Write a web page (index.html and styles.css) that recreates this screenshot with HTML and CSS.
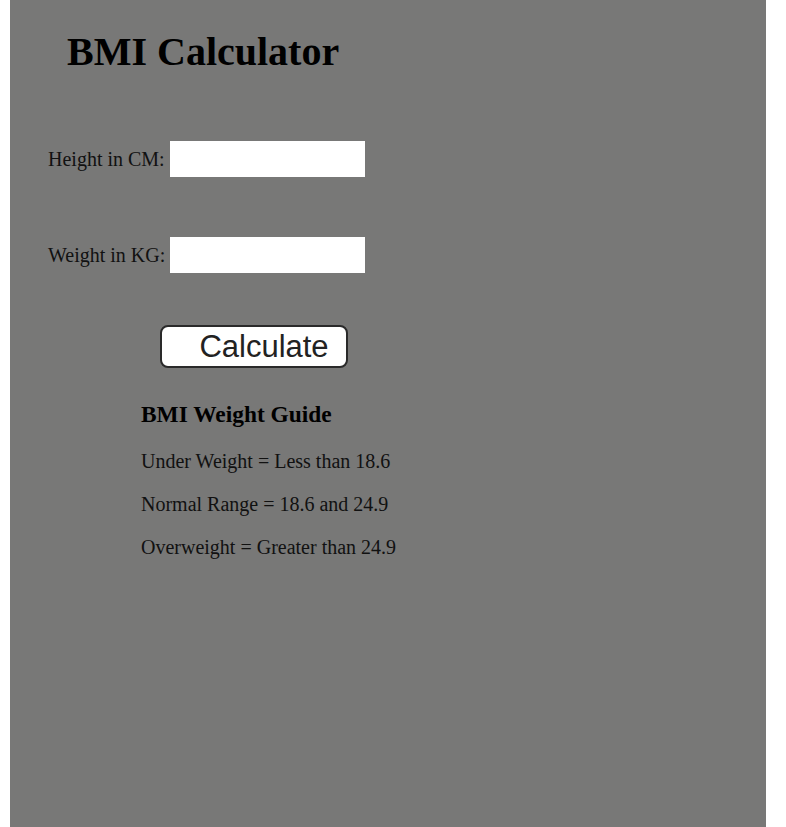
FILE: index.html
```html
<!DOCTYPE html>
<html>
<head>
<meta charset="utf-8">
<link rel="stylesheet" href="styles.css">
</head>
<body>
<div class="app">
  <h1 class="title">BMI Calculator</h1>
  <div class="form">
    <div class="row">
      <label class="label" for="h">Height in CM:</label>
      <input class="field" id="h" type="text">
    </div>
    <div class="row">
      <label class="label" for="w">Weight in KG:</label>
      <input class="field" id="w" type="text">
    </div>
    <div class="btn-row">
      <button class="btn">Calculate</button>
    </div>
  </div>
  <div class="guide">
    <h3 class="guide-title">BMI Weight Guide</h3>
    <p class="guide-item">Under Weight = Less than 18.6</p>
    <p class="guide-item">Normal Range = 18.6 and 24.9</p>
    <p class="guide-item">Overweight = Greater than 24.9</p>
  </div>
</div>
</body>
</html>
```
FILE: styles.css
```css
html, body {
  margin: 0;
  padding: 0;
  background: #ffffff;
}
body {
  font-family: "Liberation Serif", "Times New Roman", serif;
  color: #111;
}
.app {
  width: 756px;
  margin-left: 10px;
  min-height: 827px;
  background: #787877;
  box-sizing: border-box;
  padding-top: 1px;
  display: flex;
  flex-direction: column;
}
.title {
  font-size: 40px;
  font-weight: bold;
  margin: 27px 0 0 57px;
  line-height: 48px;
  color: #000;
}
.form {
  display: flex;
  flex-direction: column;
  margin-top: 65px;
  padding-left: 38px;
}
.row {
  display: flex;
  align-items: center;
  gap: 5px;
  font-size: 20px;
  height: 36px;
  margin-bottom: 60px;
}
.label {
  color: #111;
}
.field {
  width: 195px;
  height: 36px;
  border: none;
  background: #fff;
  box-sizing: border-box;
  padding: 0;
  margin: 0;
}
.btn-row {
  display: flex;
  margin-top: -8px;
  padding-left: 112px;
}
.btn {
  font-family: "Liberation Sans", Arial, sans-serif;
  font-size: 31px;
  color: #222;
  background: #fff;
  border: 2px solid #2a2a2a;
  border-radius: 8px;
  width: 188px;
  height: 43px;
  padding: 0 0 0 20px;
  line-height: 1;
}
.guide {
  padding-left: 131px;
  font-size: 20px;
  margin-top: 33px;
}
.guide-title {
  font-size: 23.4px;
  font-weight: bold;
  margin: 0 0 22px;
  color: #000;
}
.guide-item {
  margin: 0 0 20px;
  line-height: 23px;
}
```
